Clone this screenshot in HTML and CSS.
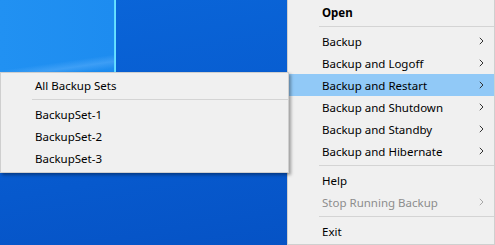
FILE: index.html
```html
<!DOCTYPE html>
<html lang="en">
<head>
    <meta charset="UTF-8">
    <title>Tray Menu</title>
    <link rel="stylesheet" href="styles.css">
</head>
<body>
    <div class="desktop">
        <!-- main tray menu -->
        <ul class="menu main-menu">
            <li class="item bold">Open</li>
            <li class="sep"></li>
            <li class="item">Backup <span class="arrow"><svg width="5" height="8" viewBox="0 0 5 8"><path d="M0.8 0.8 L4 4 L0.8 7.2"/></svg></span></li>
            <li class="item">Backup and Logoff <span class="arrow"><svg width="5" height="8" viewBox="0 0 5 8"><path d="M0.8 0.8 L4 4 L0.8 7.2"/></svg></span></li>
            <li class="item active">Backup and Restart <span class="arrow"><svg width="5" height="8" viewBox="0 0 5 8"><path d="M0.8 0.8 L4 4 L0.8 7.2"/></svg></span></li>
            <li class="item">Backup and Shutdown <span class="arrow"><svg width="5" height="8" viewBox="0 0 5 8"><path d="M0.8 0.8 L4 4 L0.8 7.2"/></svg></span></li>
            <li class="item">Backup and Standby <span class="arrow"><svg width="5" height="8" viewBox="0 0 5 8"><path d="M0.8 0.8 L4 4 L0.8 7.2"/></svg></span></li>
            <li class="item">Backup and Hibernate <span class="arrow"><svg width="5" height="8" viewBox="0 0 5 8"><path d="M0.8 0.8 L4 4 L0.8 7.2"/></svg></span></li>
            <li class="sep"></li>
            <li class="item">Help</li>
            <li class="item disabled">Stop Running Backup <span class="arrow"><svg width="5" height="8" viewBox="0 0 5 8"><path d="M0.8 0.8 L4 4 L0.8 7.2"/></svg></span></li>
            <li class="sep"></li>
            <li class="item">Exit</li>
        </ul>

        <!-- submenu for Backup and Restart -->
        <ul class="menu sub-menu">
            <li class="item">All Backup Sets</li>
            <li class="sep"></li>
            <li class="item">BackupSet-1</li>
            <li class="item">BackupSet-2</li>
            <li class="item">BackupSet-3</li>
        </ul>
    </div>
</body>
</html>
```

FILE: styles.css
```css
body {
    margin: 0;
    padding: 0;
    font-family: "Noto Sans", "Open Sans", sans-serif;
    font-size: 11.5px;
    color: #000;
}
.desktop {
    position: relative;
    width: 495px;
    height: 245px;
    overflow: hidden;
    background:
        linear-gradient(172deg, transparent 0, transparent 80%, rgba(120, 190, 255, 0.35) 88%, transparent 96%) 0 0 / 114px 72px no-repeat,
        linear-gradient(to right, #2191f2 0, #1d8cf0 114px, #58d6ff 114px, #6ee4ff 116px, transparent 116px) 0 0 / 100% 72px no-repeat,
        linear-gradient(170deg, #0a66d9 0%, #0759cd 60%, #0550c2 100%);
}
.menu {
    list-style: none;
    margin: 0;
    padding: 2px 0;
    background-color: #f0f0f0;
    border: 1px solid #cfcfcf;
}
.main-menu {
    position: absolute;
    left: 287px;
    top: -3px;
    width: 206px;
    padding-top: 3px;
}
.sub-menu {
    position: absolute;
    left: 0;
    top: 72px;
    width: 287px;
    padding: 1px 0 3px;
    box-shadow: 2px 2px 3px rgba(0, 0, 0, 0.35);
}
.item {
    display: flex;
    align-items: center;
    height: 22px;
    padding-left: 34px;
    padding-right: 10px;
    white-space: nowrap;
}
.bold {
    font-weight: bold;
}
.active {
    background-color: #91c9f7;
}
.disabled {
    color: #8d8d8d;
}
.arrow {
    margin-left: auto;
    display: flex;
}
.arrow path {
    fill: none;
    stroke: #333;
    stroke-width: 1;
}
.disabled .arrow path {
    stroke: #a8a8a8;
}
.sep {
    height: 1px;
    margin: 3px 0 3px 31px;
    background-color: #d4d4d4;
}
```
